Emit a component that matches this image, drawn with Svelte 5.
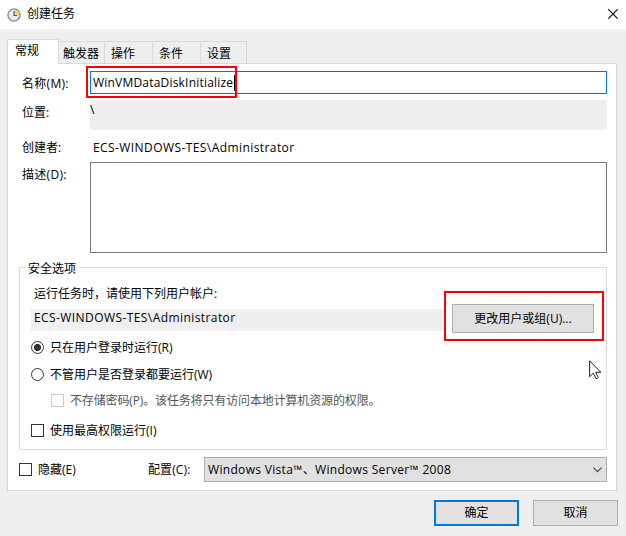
<script lang="ts">
  const tabs = ["常规", "触发器", "操作", "条件", "设置"];

  let activeTab = $state("常规");
  let taskName = $state("WinVMDataDiskInitialize");
  let description = $state("");
  let runMode = $state("loggedOn");
  let highest = $state(false);
  let hidden = $state(false);

  const account = "ECS-WINDOWS-TES\\Administrator";
</script>

<div class="dialog">
  <header class="titlebar">
    <svg class="clock" width="14" height="14" viewBox="0 0 14 14">
      <circle cx="7" cy="7" r="6.1" fill="#e3edf3" stroke="#85898c" stroke-width="1.3" />
      <path d="M7 7V1.8A5.2 5.2 0 0 1 12.2 7Z" fill="#f5cf83" />
      <path d="M7 3V7.5H10.2" fill="none" stroke="#4b5963" stroke-width="1.1" />
    </svg>
    <span class="title">创建任务</span>
    <button class="close" aria-label="关闭">
      <svg width="10" height="10" viewBox="0 0 10 10">
        <path d="M.3.3L9.7 9.7M9.7.3L.3 9.7" stroke="#000" stroke-width="1.1" />
      </svg>
    </button>
  </header>

  <nav class="tabs">
    {#each tabs as tab}
      <button class="tab" class:active={activeTab === tab} onclick={() => (activeTab = tab)}>{tab}</button>
    {/each}
  </nav>

  <main class="panel">
    <div class="row name-row">
      <label for="name">名称(M):</label>
      <div class="name-field">
        <input id="name" type="text" bind:value={taskName} spellcheck="false" />
        <i class="caret"></i>
        <i class="mark-name"></i>
      </div>
    </div>
    <div class="row location-row">
      <span>位置:</span>
      <div class="location">\</div>
    </div>
    <div class="row creator-row">
      <span>创建者:</span>
      <div class="account">{account}</div>
    </div>
    <div class="row desc-row">
      <label for="desc">描述(D):</label>
      <textarea id="desc" bind:value={description}></textarea>
    </div>

    <section class="group">
      <h2>安全选项</h2>
      <p>运行任务时，请使用下列用户帐户:</p>
      <div class="user-row">
        <div class="user account">{account}</div>
        <div class="change">
          <button class="btn">更改用户或组(U)...</button>
        </div>
      </div>
      <label class="option first">
        <input type="radio" value="loggedOn" bind:group={runMode} />只在用户登录时运行(R)
      </label>
      <label class="option second">
        <input type="radio" value="always" bind:group={runMode} />不管用户是否登录都要运行(W)
      </label>
      <label class="option nested">
        <input type="checkbox" disabled />不存储密码(P)。该任务将只有访问本地计算机资源的权限。
      </label>
      <label class="option highest">
        <input type="checkbox" bind:checked={highest} />使用最高权限运行(I)
      </label>
      <svg class="pointer" width="13" height="20" viewBox="0 0 13 20">
        <path d="M.6.8V16.7L4.3 13.2L7 18.6Q8.8 18.8 9.2 17.5L6.8 12.3H11.8Z" fill="#fff" stroke="#1c1c2c" stroke-width="1" />
      </svg>
    </section>

    <div class="bottom">
      <label class="option">
        <input type="checkbox" bind:checked={hidden} />隐藏(E)
      </label>
      <span class="config-label">配置(C):</span>
      <button class="select">
        <span>Windows Vista™、Windows Server™ 2008</span>
        <svg width="9" height="6" viewBox="0 0 9 6">
          <path d="M.5.7L4.5 4.7L8.5.7" fill="none" stroke="#444" stroke-width="1.1" />
        </svg>
      </button>
    </div>
  </main>

  <footer>
    <button class="btn default">确定</button>
    <button class="btn">取消</button>
  </footer>
</div>

<style>
  :global(body) {
    margin: 0;
  }

  .dialog {
    width: 626px;
    height: 536px;
    overflow: hidden;
    background: #efefef;
    color: #000;
    font: 12px/16px "Open Sans", "Noto Sans CJK SC", sans-serif;
  }

  .dialog * {
    box-sizing: border-box;
  }

  button,
  input,
  textarea {
    margin: 0;
    padding: 0;
    border: 0;
    border-radius: 0;
    outline: 0;
    font: inherit;
    color: inherit;
    background: none;
  }

  svg {
    display: block;
  }

  .titlebar {
    display: flex;
    align-items: center;
    height: 29px;
    padding: 0 8px 2px 7px;
    background: #fff;
  }

  .clock {
    margin-top: 2px;
  }

  .title {
    flex: 1;
    margin-left: 6px;
    padding-top: 1px;
  }

  .tabs {
    display: flex;
    align-items: flex-end;
    height: 34px;
    padding-left: 7px;
  }

  .tab {
    height: 22px;
    width: 48px;
    padding: 2px 0 0 6px;
    text-align: left;
    border: 1px solid #d9d9d9;
    border-width: 1px 1px 0 0;
    white-space: nowrap;
  }

  .tab:nth-child(2) {
    width: 46px;
    padding-left: 4px;
  }

  .tab:last-child {
    width: 46px;
  }

  .tab.active {
    position: relative;
    width: 52px;
    height: 25px;
    margin-bottom: -1px;
    padding: 0 0 2px 7px;
    border-left-width: 1px;
    background: #fff;
  }

  .panel {
    width: 610px;
    height: 428px;
    margin-left: 7px;
    padding: 7px 9px 0 11px;
    border: 1px solid #d9d9d9;
    background: #fff;
  }

  .row {
    display: grid;
    grid-template-columns: 68px 1fr;
    padding-left: 3px;
  }

  .row label {
    letter-spacing: 0.3px;
  }

  .name-row {
    height: 29px;
  }

  .name-row label,
  .location-row span {
    padding-top: 5px;
  }

  .name-field {
    position: relative;
    height: 23px;
  }

  .name-field input {
    width: 100%;
    height: 23px;
    padding: 0 2px;
    border: 1px solid #0078d7;
    letter-spacing: 0.2px;
  }

  .caret {
    position: absolute;
    left: 144px;
    top: 4px;
    width: 1px;
    height: 16px;
    background: #000;
  }

  .mark-name {
    position: absolute;
    left: -4px;
    top: -5px;
    width: 151px;
    height: 32px;
    border: 2px solid #f00;
  }

  .location {
    height: 30px;
    padding-top: 2px;
    background: #efefef;
  }

  .creator-row {
    padding-top: 10px;
    height: 32px;
  }

  .creator-row .account {
    padding-left: 3px;
  }

  .account {
    letter-spacing: 0.42px;
  }

  .desc-row label {
    padding-top: 5px;
  }

  textarea {
    height: 91px;
    border: 1px solid #7a7a7a;
    resize: none;
  }

  .group {
    position: relative;
    height: 183px;
    margin-top: 14px;
    padding-left: 11px;
    border: 1px solid #dcdcdc;
  }

  h2 {
    width: 53px;
    margin: -7px 0 0 -5px;
    padding-left: 2px;
    font: inherit;
    background: #fff;
  }

  p {
    margin: 9px 0 0 3px;
  }

  .user-row {
    display: flex;
    align-items: center;
    height: 50px;
    margin-top: -11px;
  }

  .user {
    flex: 1;
    height: 22px;
    padding: 1px 0 0 3px;
    margin-top: 8px;
    background: #efefef;
  }

  .change {
    width: 160px;
    height: 50px;
    margin-right: 2px;
    padding: 11px 6px;
    border: 2px solid #f00;
  }

  .btn {
    width: 85px;
    height: 26px;
    border: 1px solid #adadad;
    background: #e1e1e1;
  }

  .change .btn {
    width: 142px;
    height: 29px;
  }

  .option {
    display: flex;
    align-items: center;
    gap: 6px;
    height: 16px;
  }

  .option.first {
    margin-top: -1px;
  }

  .option.second {
    margin-top: 11px;
  }

  .option.nested {
    margin: 10px 0 0 20px;
    color: #555;
    letter-spacing: -0.14px;
  }

  .option.highest {
    margin-top: 14px;
  }

  input[type="radio"],
  input[type="checkbox"] {
    appearance: none;
    width: 13px;
    height: 13px;
    border: 1px solid #333;
    background: #fff;
  }

  .group input {
    margin-bottom: 1px;
  }

  input[type="radio"] {
    border-radius: 50%;
  }

  input[type="radio"]:checked {
    background: radial-gradient(circle, #333 3.2px, #fff 3.9px);
  }

  input[type="checkbox"]:checked {
    box-shadow: inset 0 0 0 2px #fff;
    background: #333;
  }

  input[type="checkbox"]:disabled {
    border-color: #ccc;
  }

  .pointer {
    position: absolute;
    left: 569px;
    top: 92px;
  }

  .bottom {
    display: flex;
    align-items: center;
    height: 25px;
    margin-top: 7px;
  }

  .config-label {
    width: 56px;
    margin-left: auto;
    letter-spacing: 0.1px;
  }

  .select {
    display: flex;
    align-items: center;
    justify-content: space-between;
    width: 403px;
    height: 25px;
    padding: 0 4px 0 3px;
    border: 1px solid #adadad;
    background: #e1e1e1;
    letter-spacing: 0.32px;
  }

  footer {
    display: flex;
    justify-content: flex-end;
    gap: 14px;
    padding: 9px 8px 0 0;
  }

  .default {
    border: 2px solid #0078d7;
  }
</style>
